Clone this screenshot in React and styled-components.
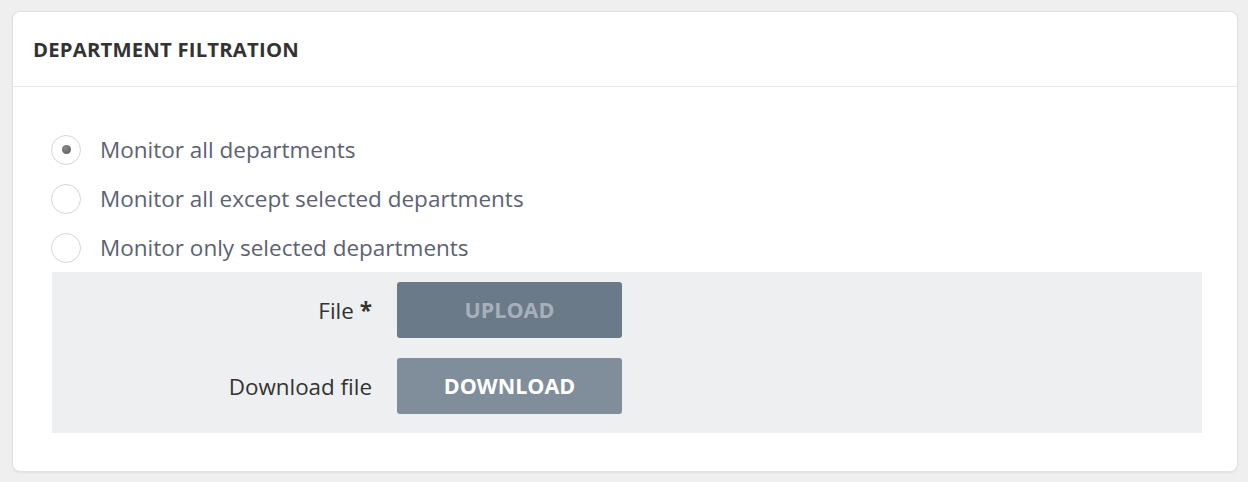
import styled, { createGlobalStyle } from "styled-components";
import { useState } from "react";

const GlobalStyle = createGlobalStyle`
  html, body {
    margin: 0;
    background: #efefef;
  }
  body {
    padding: 11px 10px 11px 12px;
    font-family: "Open Sans", "Liberation Sans", sans-serif;
  }
`;

const Card = styled.div`
  background: #fff;
  border: 1px solid #e2e2e2;
  border-radius: 8px;
  box-shadow: 0 1px 2px rgba(0, 0, 0, 0.06);
  box-sizing: border-box;
  height: 461px;
`;

const Header = styled.div`
  height: 75px;
  display: flex;
  align-items: center;
  padding-left: 20px;
  border-bottom: 1px solid #e8e8e8;
  box-sizing: border-box;
`;

const Title = styled.h2`
  margin: 0;
  font-size: 20.3px;
  font-weight: 700;
  color: #333;
  letter-spacing: 0.2px;
  text-transform: uppercase;
`;

const Body = styled.div`
  padding: 38px 35px 38px 38px;
`;

const RadioRow = styled.label`
  display: flex;
  align-items: center;
  gap: 19px;
  height: 49px;
  cursor: pointer;
`;

const Circle = styled.span`
  width: 28px;
  height: 28px;
  border-radius: 50%;
  border: 1px solid #d6d6d6;
  background: #fff;
  display: flex;
  align-items: center;
  justify-content: center;
  flex-shrink: 0;

  &::after {
    content: "";
    display: ${(p) => (p.$checked ? "block" : "none")};
    width: 9px;
    height: 9px;
    border-radius: 50%;
    background: radial-gradient(circle at 40% 35%, #8a8a8a, #555);
  }
`;

const RadioText = styled.span`
  font-size: 22.5px;
  color: #5c6272;
`;

const FileBox = styled.div`
  background: #eeeff0;
  margin-left: 1px;
  padding: 10px 0 19px;
  display: flex;
  flex-direction: column;
  gap: 20px;
`;

const FieldRow = styled.div`
  display: grid;
  grid-template-columns: 320px 225px;
  column-gap: 25px;
  align-items: center;
`;

const Label = styled.span`
  text-align: right;
  font-size: 22.4px;
  color: #333;
`;

const Star = styled.span`
  font-weight: 700;
  margin-left: 6px;
`;

const ActionButton = styled.button`
  height: 56px;
  padding-bottom: 2px;
  border: none;
  border-radius: 3px;
  font-family: inherit;
  font-size: 21.5px;
  font-weight: 700;
  background: ${(p) => (p.$disabled ? "#6b7a89" : "#808e9c")};
  color: ${(p) => (p.$disabled ? "#a7b0ba" : "#fff")};
  cursor: ${(p) => (p.$disabled ? "default" : "pointer")};
`;

const options = [
  "Monitor all departments",
  "Monitor all except selected departments",
  "Monitor only selected departments",
];

const App = () => {
  const [selected, setSelected] = useState(0);

  return (
    <>
      <GlobalStyle />
      <Card>
        <Header>
          <Title>Department filtration</Title>
        </Header>
        <Body>
          {options.map((item, i) => (
            <RadioRow key={i} onClick={() => setSelected(i)}>
              <Circle $checked={selected === i} />
              <RadioText>{item}</RadioText>
            </RadioRow>
          ))}
          <FileBox>
            <FieldRow>
              <Label>
                File<Star>*</Star>
              </Label>
              <ActionButton $disabled>UPLOAD</ActionButton>
            </FieldRow>
            <FieldRow>
              <Label>Download file</Label>
              <ActionButton>DOWNLOAD</ActionButton>
            </FieldRow>
          </FileBox>
        </Body>
      </Card>
    </>
  );
};

export default App;
